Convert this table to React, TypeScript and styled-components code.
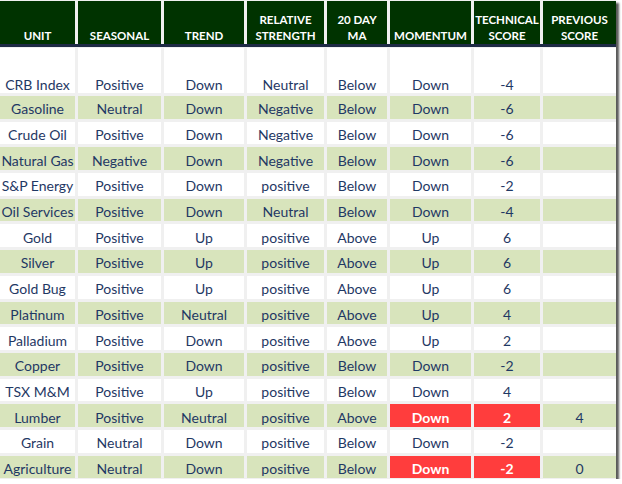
import styled, { createGlobalStyle } from "styled-components";

const GlobalStyle = createGlobalStyle`
    body {
        margin: 0;
        background: #ffffff;
        font-family: Lato, "Liberation Sans", sans-serif;
    }
`;

const COLS = "75px 83px 80px 77px 60px 81px 66px 73px";

const Sheet = styled.div`
    width: 616px;
    background: #f0f0f0;
    box-shadow: 3px 3px 2px #5a5a5a;
    padding-bottom: 1px;
`;

const HeaderRow = styled.div`
    display: grid;
    grid-template-columns: ${COLS};
    column-gap: 3px;
    height: 44px;
    padding-top: 1px;
    box-sizing: border-box;
`;

const HeadCell = styled.div`
    background: #003300;
    color: #ffffff;
    font-size: 11.5px;
    font-weight: 700;
    line-height: 16px;
    display: flex;
    flex-direction: column;
    justify-content: flex-end;
    align-items: center;
    text-align: center;
    white-space: nowrap;
`;

const Rule = styled.div`
    height: 3px;
    background: #1e2a45;
    margin-bottom: 1px;
`;

const Body = styled.div`
    display: grid;
    grid-template-columns: ${COLS};
    grid-template-rows: 45px;
    grid-auto-rows: 22.7px;
    column-gap: 3px;
    row-gap: 3px;
`;

const Cell = styled.div<{ $shade?: boolean; $alert?: boolean; $first?: boolean }>`
    background: ${(p) => (p.$alert ? "#ff3d3d" : p.$shade ? "#d8e4bc" : "#ffffff")};
    color: ${(p) => (p.$alert ? "#ffffff" : "#1f3864")};
    font-weight: ${(p) => (p.$alert ? 700 : 400)};
    font-size: 14px;
    display: flex;
    align-items: ${(p) => (p.$first ? "flex-end" : "center")};
    justify-content: center;
    white-space: nowrap;
    padding-top: ${(p) => (p.$first ? "0" : "3px")};
`;

type Row = [string, string, string, string, string, string, string, string];

const rows: Row[] = [
    ["CRB Index", "Positive", "Down", "Neutral", "Below", "Down", "-4", ""],
    ["Gasoline", "Neutral", "Down", "Negative", "Below", "Down", "-6", ""],
    ["Crude Oil", "Positive", "Down", "Negative", "Below", "Down", "-6", ""],
    ["Natural Gas", "Negative", "Down", "Negative", "Below", "Down", "-6", ""],
    ["S&P Energy", "Positive", "Down", "positive", "Below", "Down", "-2", ""],
    ["Oil Services", "Positive", "Down", "Neutral", "Below", "Down", "-4", ""],
    ["Gold", "Positive", "Up", "positive", "Above", "Up", "6", ""],
    ["Silver", "Positive", "Up", "positive", "Above", "Up", "6", ""],
    ["Gold Bug", "Positive", "Up", "positive", "Above", "Up", "6", ""],
    ["Platinum", "Positive", "Neutral", "positive", "Above", "Up", "4", ""],
    ["Palladium", "Positive", "Down", "positive", "Above", "Up", "2", ""],
    ["Copper", "Positive", "Down", "positive", "Below", "Down", "-2", ""],
    ["TSX M&M", "Positive", "Up", "positive", "Below", "Down", "4", ""],
    ["Lumber", "Positive", "Neutral", "positive", "Above", "Down", "2", "4"],
    ["Grain", "Neutral", "Down", "positive", "Below", "Down", "-2", ""],
    ["Agriculture", "Neutral", "Down", "positive", "Below", "Down", "-2", "0"],
];

const alerts = new Set(["Lumber", "Agriculture"]);

const heads = [
    ["UNIT"],
    ["SEASONAL"],
    ["TREND"],
    ["RELATIVE", "STRENGTH"],
    ["20 DAY", "MA"],
    ["MOMENTUM"],
    ["TECHNICAL", "SCORE"],
    ["PREVIOUS", "SCORE"],
];

const App = () => {
    return (
        <>
            <GlobalStyle />
            <Sheet>
                <HeaderRow>
                    {heads.map((h) => (
                        <HeadCell key={h.join(" ")}>
                            {h.map((line) => (
                                <span key={line}>{line}</span>
                            ))}
                        </HeadCell>
                    ))}
                </HeaderRow>
                <Rule />
                <Body>
                    {rows.map((row, r) =>
                        row.map((val, c) => (
                            <Cell
                                key={`${r}-${c}`}
                                $first={r === 0}
                                $shade={r % 2 === 1}
                                $alert={alerts.has(row[0]) && (c === 5 || c === 6)}
                            >
                                {val}
                            </Cell>
                        ))
                    )}
                </Body>
            </Sheet>
        </>
    );
};

export default App;
